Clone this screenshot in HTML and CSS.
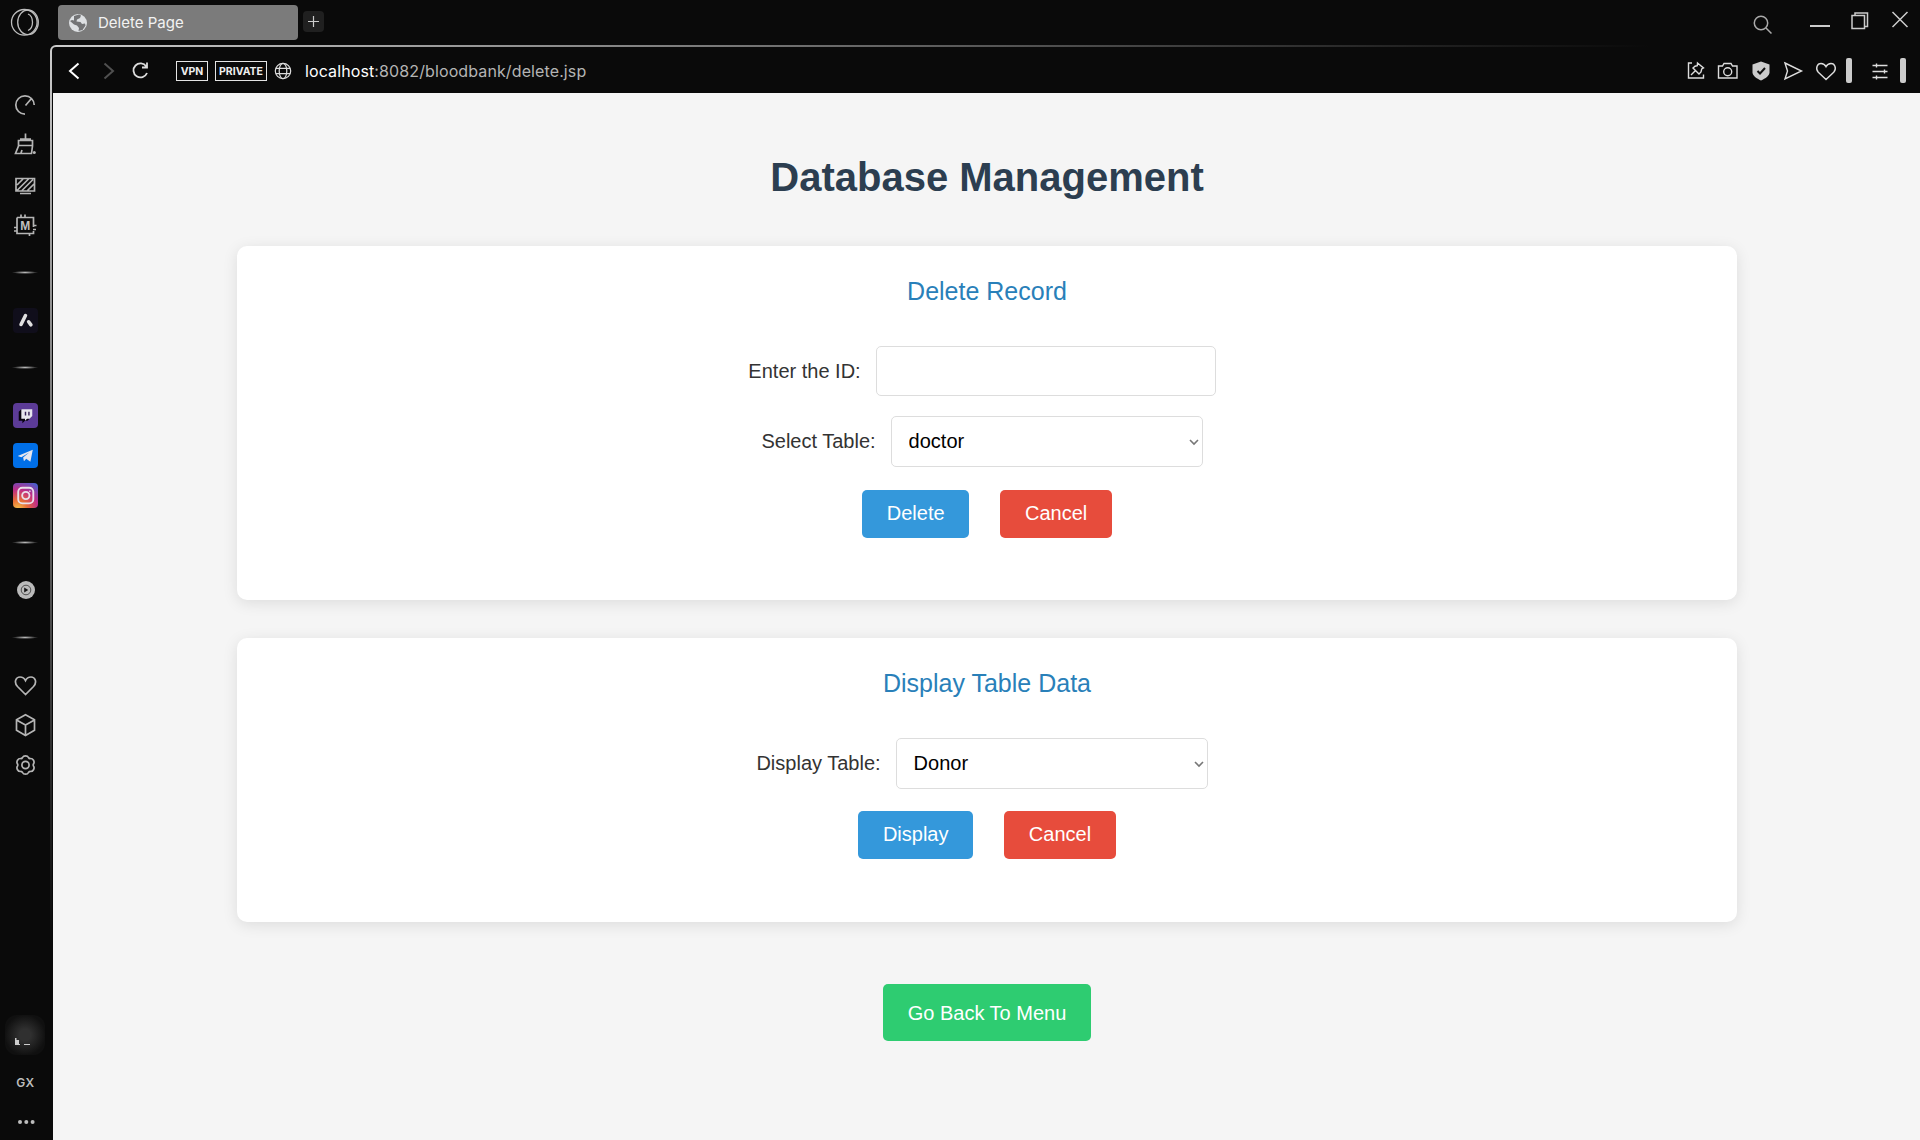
FILE: index.html
```html
<!DOCTYPE html>
<html lang="en">
<head>
<meta charset="utf-8">
<title>Delete Page</title>
<link rel="stylesheet" href="styles.css">
</head>
<body>
<div class="browser">
  <nav class="sidebar">
    <svg class="logo" viewBox="0 0 30 30"><circle cx="14.300" cy="15.300" r="12.800"/><ellipse cx="18" cy="15.300" rx="10.300" ry="12.300"/><path d="M18 7C24 9.500 24 21 18 23.500"/></svg>
    <div class="group">
      <span class="item"><svg viewBox="0 0 24 24"><path d="M12 21.200A9.200 9.200 0 1 1 21.200 12M12.500 12.500L18 6"/></svg></span>
      <span class="item"><svg viewBox="0 0 24 24"><path d="M12.500 .5v5.500M7 6h11M5.500 7.500h14v5h-14zM5.500 13L2.500 20.500h16L19.500 13M8 20l1-3"/><circle class="solid" cx="21.300" cy="19.500" r="1.500"/></svg></span>
      <span class="item"><svg viewBox="0 0 24 24"><path d="M3 5.500h18.500v12.500H3zM7 20.500h11M4 12l6-6M4 17.500L15.500 6M9 17.500L20 6.500M14.500 17.500l6.500-6.500"/></svg></span>
      <span class="item chip"><svg viewBox="0 0 24 24"><path d="M4 4.500h16.500V14M20.500 18v2.500H4v-16M8 4.500V1.500M12 4.500V1.500M20.500 12.500H23.500M20 16.500h3M4 14.500H1M4 18H1M16.500 20.500V23"/><text x="12.200" y="16.700">M</text></svg></span>
    </div>
    <i class="rule"></i>
    <div class="group"><span class="item"><svg class="badge aria" viewBox="0 0 24 24"><path d="M12 7.200L7.700 15.800M15 13.200l2.200 3"/></svg></span></div>
    <i class="rule"></i>
    <div class="group">
      <span class="item"><svg class="badge twitch" viewBox="0 0 24 24"><path class="shade" d="M8 6L5.500 8.500v8.500H9v2.500L11.500 17H14l4-4z"/><path class="white" d="M8 6h10.500v6.500L16 15h-2.500L11.500 17v-2H8z"/><path class="bars" d="M12 8.500V12M15.300 8.500V12"/></svg></span>
      <span class="item"><svg class="badge telegram" viewBox="0 0 24 24"><path class="white" d="M4.500 12.500L19 6.500 16.700 18l-4-3-2.200 2.500-.8-3.500L15.500 9l-7.500 4.600z"/></svg></span>
      <span class="item"><svg class="badge instagram" viewBox="0 0 24 24"><rect x="5" y="4.500" width="14.500" height="15" rx="4"/><circle cx="12.300" cy="12" r="3.500"/><circle class="white" cx="16.200" cy="8" r=".8"/></svg></span>
    </div>
    <i class="rule"></i>
    <div class="group"><span class="item"><svg class="player" viewBox="0 0 24 24"><circle class="disc" cx="13" cy="12" r="9"/><circle class="ring" cx="13" cy="12" r="4.800"/><path class="play" d="M11.200 9.500v5l4-2.500z"/></svg></span></div>
    <i class="rule"></i>
    <div class="group">
      <span class="item"><svg viewBox="0 0 24 24"><path d="M12.500 21.500L4.500 13.500C.500 9 3 4 7 4c2.500 0 4.500 1.500 5.500 3.500 1-2 3-3.500 5.500-3.500 4 0 6.500 5 2.500 9.500z"/></svg></span>
      <span class="item"><svg viewBox="0 0 24 24"><path d="M12.500 1.800l9 5v10.400l-9 5.300-9-5.300V6.800zM3.500 7l9 5 9-5M12.500 12v10.500"/></svg></span>
      <span class="item"><svg viewBox="0 0 24 24"><path d="M9.500 4.500q.8-1.700 3-1.700t3 1.700q.6 1.200 2 1 1.900-.1 3 1.800t.1 3.400q-.8 1.300 0 2.600 1 1.500-.1 3.400t-3 1.800q-1.400-.2-2 1-.8 1.700-3 1.700t-3-1.700q-.6-1.200-2-1-1.900.1-3-1.800t-.1-3.400q.8-1.300 0-2.600-1-1.500.1-3.400t3-1.800q1.400.2 2-1z"/><circle cx="12.500" cy="12" r="3.600"/></svg></span>
    </div>
    <div class="foot">
      <span class="pet"><svg viewBox="0 0 40 40"><path d="M10 23h1.500v2H14v4h1v1h-5zM19 29h6v1h-6z"/></svg></span>
      <span class="gx">GX</span>
      <svg class="dots" viewBox="0 0 24 24"><circle cx="6" cy="12" r="2"/><circle cx="12.300" cy="12" r="2"/><circle cx="18.600" cy="12" r="2"/></svg>
    </div>
  </nav>

  <header class="tabs">
    <div class="tab"><svg class="earth" viewBox="0 0 20 20"><circle cx="10" cy="10" r="9"/><path d="M6 3l5-1.500 2 1-1 2.500-3 1.500-.5 2 4 .5 1.500 2 3-.5.5 2-3 4.500-4 1 .5-3-2-2.500-3-1-4-3.500 2-1 2 .5z"/></svg><span>Delete Page</span></div>
    <span class="newtab"><svg viewBox="0 0 21 21"><path d="M5 10.500h11M10.500 5v11"/></svg></span>
    <div class="window">
      <svg class="search" viewBox="0 0 24 24"><circle cx="11" cy="11" r="6.700"/><path d="M16 16l5.500 5.500"/></svg>
      <svg viewBox="0 0 24 24"><path class="thick" d="M2 18h20"/></svg>
      <svg viewBox="0 0 24 24"><path d="M4 7.500h12.500v13H4zM7 7.500V5h12.500v13.500h-3"/></svg>
      <svg viewBox="0 0 24 24"><path d="M4.500 4l15 15M19.500 4l-15 15"/></svg>
    </div>
  </header>

  <div class="frame">
    <div class="view">
      <div class="toolbar">
        <svg class="back" viewBox="0 0 24 24"><path d="M16.500 4.500l-8.500 7.500 8.500 7.500"/></svg>
        <svg class="forward" viewBox="0 0 24 24"><path d="M8.500 4.500l8.500 7.500-8.500 7.500"/></svg>
        <svg class="reload" viewBox="0 0 24 24"><path d="M17.300 7.500A7 7 0 1 0 18 14M18 3.500v5h-5"/></svg>
        <span class="flag">VPN</span><span class="flag private">PRIVATE</span>
        <svg class="globe" viewBox="0 0 20 20"><circle cx="10" cy="10" r="7.700"/><ellipse cx="10" cy="10" rx="3.800" ry="7.700"/><path d="M3 7.300h14M3 12.700h14"/></svg>
        <span class="url"><b>localhost</b>:8082/bloodbank/delete.jsp</span>
        <div class="tools">
          <svg viewBox="0 0 24 24"><path d="M8 4H4.500v15h15v-3.500M13.500 4l6 5-1.800 1-.7 3-2 2-6-6 2-1.800 2.300-.5zM11 12L7 16"/></svg>
          <svg viewBox="0 0 24 24"><path d="M2.500 7h4l1.500-2.500h7L16.500 7h4.500v12H2.500z"/><circle cx="11.700" cy="12.800" r="4"/></svg>
          <svg class="shield" viewBox="0 0 24 24"><path class="body" d="M12 2.500l8.500 3v8c0 3-4 6-8.500 8-4.500-2-8.500-5-8.500-8v-8z"/><path class="tick" d="M8.500 12l2.500 2.500 5-5.500"/></svg>
          <svg viewBox="0 0 24 24"><path d="M4 4l16.500 8L4 20 6.500 12z"/></svg>
          <svg viewBox="0 0 24 24"><path d="M12 20.500L4.300 13.200C1 9.500 3.200 4.500 7 4.500c2.300 0 4 1.300 5 3.300 1-2 2.700-3.300 5-3.300 3.800 0 6 5 2.700 8.700z"/></svg>
          <i class="grip"></i>
          <svg class="sliders" viewBox="0 0 24 24"><path d="M4.500 6.500h15M4.500 12.500h15M4.500 18.500h15M8.500 4.500v4M16.500 10.500v4M8.500 16.500v4"/></svg>
          <i class="grip"></i>
        </div>
      </div>

      <main class="page">
        <h1>Database Management</h1>
        <section class="card record">
          <h2>Delete Record</h2>
          <div class="field"><label for="rid">Enter the ID:</label><input id="rid" type="text"></div>
          <div class="field"><label for="tbl">Select Table:</label><span class="select"><select id="tbl"><option>doctor</option></select><svg viewBox="0 0 10 8"><path d="M1 2l4 4 4-4"/></svg></span></div>
          <div class="actions"><button class="primary">Delete</button><button class="danger">Cancel</button></div>
        </section>
        <section class="card display">
          <h2>Display Table Data</h2>
          <div class="field"><label for="show">Display Table:</label><span class="select"><select id="show"><option>Donor</option></select><svg viewBox="0 0 10 8"><path d="M1 2l4 4 4-4"/></svg></span></div>
          <div class="actions"><button class="primary">Display</button><button class="danger">Cancel</button></div>
        </section>
        <a class="menu">Go Back To Menu</a>
      </main>
    </div>
  </div>
</div>
</body>
</html>
```
FILE: styles.css
```css
* { box-sizing: border-box; }
body { margin: 0; background: #0a0a0a; font-family: Inter, sans-serif; }
svg { display: block; flex: none; fill: none; stroke: #ccc; stroke-width: 1.5; }

.browser { display: grid; grid-template: 45px 1fr / 50px 1fr; width: 1920px; height: 1140px; overflow: hidden; }

.sidebar { grid-row: 1 / 3; display: flex; flex-direction: column; align-items: center; }
.logo { width: 30px; height: 30px; margin: 7px 0 48px; stroke: #bdbdbd; stroke-width: 1.3; }
.item { display: flex; align-items: center; justify-content: center; width: 50px; height: 40px; }
.item svg { width: 24px; height: 24px; stroke: #b5b5b5; stroke-width: 1.7; }
.item .solid { fill: #b5b5b5; stroke: none; }
.chip text { font: bold 12px "Liberation Sans", sans-serif; text-anchor: middle; fill: #c0c0c0; stroke: none; }
.rule { flex: none; width: 26px; height: 3px; margin: 26px 0; background: radial-gradient(closest-side, #bbb, transparent); }
.item .badge { width: 25px; height: 25px; margin: 1px 0 0 1px; border-radius: 4px; }
.item .aria { background: #100e1b; stroke: #e0e0e0; stroke-width: 3.4; stroke-linecap: round; }
.item .twitch { background: #5c3b97; stroke: none; }
.shade { fill: #080410; }
.item .white { fill: #e6e6ee; stroke: none; }
.bars { stroke: #352257; stroke-width: 1.4; }
.item .telegram { background: #006fe8; }
.item .instagram { background: radial-gradient(circle at 20% 105%, #f3c34d, #e86d36 28%, #bf2c87 60%, transparent 95%), #4360d0; stroke: #eadfea; stroke-width: 1.8; }
.disc { fill: #bababa; stroke: none; }
.ring { stroke: #333; stroke-width: .8; }
.play { fill: #151515; stroke: none; }
.rule + .group { margin-top: 3px; }
.rule + .group { margin-top: 0; }
.foot { display: flex; flex-direction: column; align-items: center; margin-top: auto; padding-bottom: 6px; }
.pet { width: 40px; height: 40px; border-radius: 12px; background: radial-gradient(circle, #303030 20%, #101010 72%); }
.pet svg { fill: #ccc; stroke: none; }
.gx { margin-top: 19px; padding-left: 1px; font-size: 12px; line-height: 18px; font-weight: 600; letter-spacing: .5px; color: #bdbdbd; }
.dots { width: 24px; height: 24px; margin: 18px 0 0 1px; fill: #bdbdbd; stroke: none; }

.tabs { display: flex; align-items: flex-start; padding: 5px 8px 0; }
.tab { display: flex; align-items: center; gap: 10px; width: 240px; height: 35px; padding-left: 10px; border-radius: 4px; background: #7b7b7b; color: #f2f2f2; font-size: 15px; }
.earth { width: 20px; height: 20px; fill: #dde0e3; stroke: none; }
.earth path { fill: #737476; }
.newtab { width: 21px; height: 21px; margin: 6px 0 0 5px; border-radius: 4px; background: #202020; }
.newtab svg { stroke-width: 1.2; }
.window { display: flex; gap: 16px; margin: 3px 0 0 auto; }
.window svg { width: 24px; height: 24px; }
.window .search { margin: 4px 18px 0 0; stroke: #aaa; }
.window .thick { stroke-width: 2; }

.frame { padding: 2px 0 0 2px; border-radius: 6px 0 0; background: radial-gradient(ellipse 1600px 900px at 0 0, #ccc, #222 85%, #0a0a0a); }
.view { height: 1093px; padding-left: 1px; border-radius: 4px 0 0; background: #0a0a0a; }
.toolbar { display: flex; align-items: center; height: 46px; padding: 1px 14px 0 9px; }
.toolbar svg { width: 24px; height: 24px; stroke: #ddd; }
.toolbar .back { stroke: #fff; stroke-width: 2; }
.toolbar .forward { margin-left: 10px; stroke: #505050; stroke-width: 2; }
.toolbar .reload { margin-left: 9px; stroke-width: 1.8; }
.flag { width: 32px; height: 20px; border: 1px solid #e4e4e4; font: bold 10.5px/19px Inter, sans-serif; text-align: center; color: #eee; margin-left: 23px; }
.flag.private { width: 52px; margin-left: 7px; }
.toolbar .globe { width: 20px; height: 20px; margin-left: 6px; stroke-width: 1.2; }
.url { margin-left: 12px; font-size: 16px; letter-spacing: .11px; color: #b4b4b4; }
.url b { font-weight: 400; color: #fff; }
.tools { display: flex; align-items: center; gap: 8.5px; margin-left: auto; }
.tools svg { stroke-width: 1.4; }
.tools .shield .body { fill: #ccc; stroke: none; }
.tools .shield .tick { stroke: #111; stroke-width: 2; }
.grip { width: 6px; height: 25px; border-radius: 2px; background: #ccc; }
.sliders { margin-left: 7px; }

.page { display: flex; flex-direction: column; align-items: center; height: 1047px; padding-left: 1px; background: #f5f5f5; color: #333; font: 20px/23px "Liberation Sans", Arial, sans-serif; }
h1 { margin: 61px 0 46px; font-size: 40px; line-height: 46px; color: #2c3e50; }
h2 { margin: 0 0 40px; font-size: 25px; line-height: 29px; font-weight: 400; color: #2980b9; }
.card { width: 1500px; height: 284px; padding: 31px 0 0; border-radius: 10px; background: #fff; box-shadow: 0 3px 15px rgba(0,0,0,.1); }
.record { height: 354px; margin-bottom: 38px; }
.card h2 { text-align: center; }
.field { display: flex; justify-content: center; align-items: center; gap: 15px; margin: 0 10px 20px 0; }
.field input { width: 340px; height: 50px; border: 1px solid #ddd; border-radius: 5px; padding: 0 16px; font: inherit; }
.select { display: grid; width: 312px; height: 51px; }
.select select { grid-area: 1 / 1; appearance: none; border: 1px solid #ddd; border-radius: 5px; padding: 0 17px; background: #fff; font: inherit; color: #000; }
.select svg { grid-area: 1 / 1; width: 10px; height: 8px; align-self: center; justify-self: end; margin-right: 4px; stroke: #777; stroke-width: 1.6; pointer-events: none; }
.actions { display: flex; justify-content: center; gap: 31px; padding-top: 3px; }
.display .actions { padding-top: 2px; }
button { height: 48px; padding: 0 24.7px 1px; border: 0; border-radius: 5px; font: inherit; color: #fff; }
.record button { padding-bottom: 2px; }
.primary { background: #3498db; }
.danger { background: #e74c3c; }
.menu { margin-top: 62px; padding: 18px 25px 16px; border-radius: 5px; background: #2ecc71; color: #fff; }
```
